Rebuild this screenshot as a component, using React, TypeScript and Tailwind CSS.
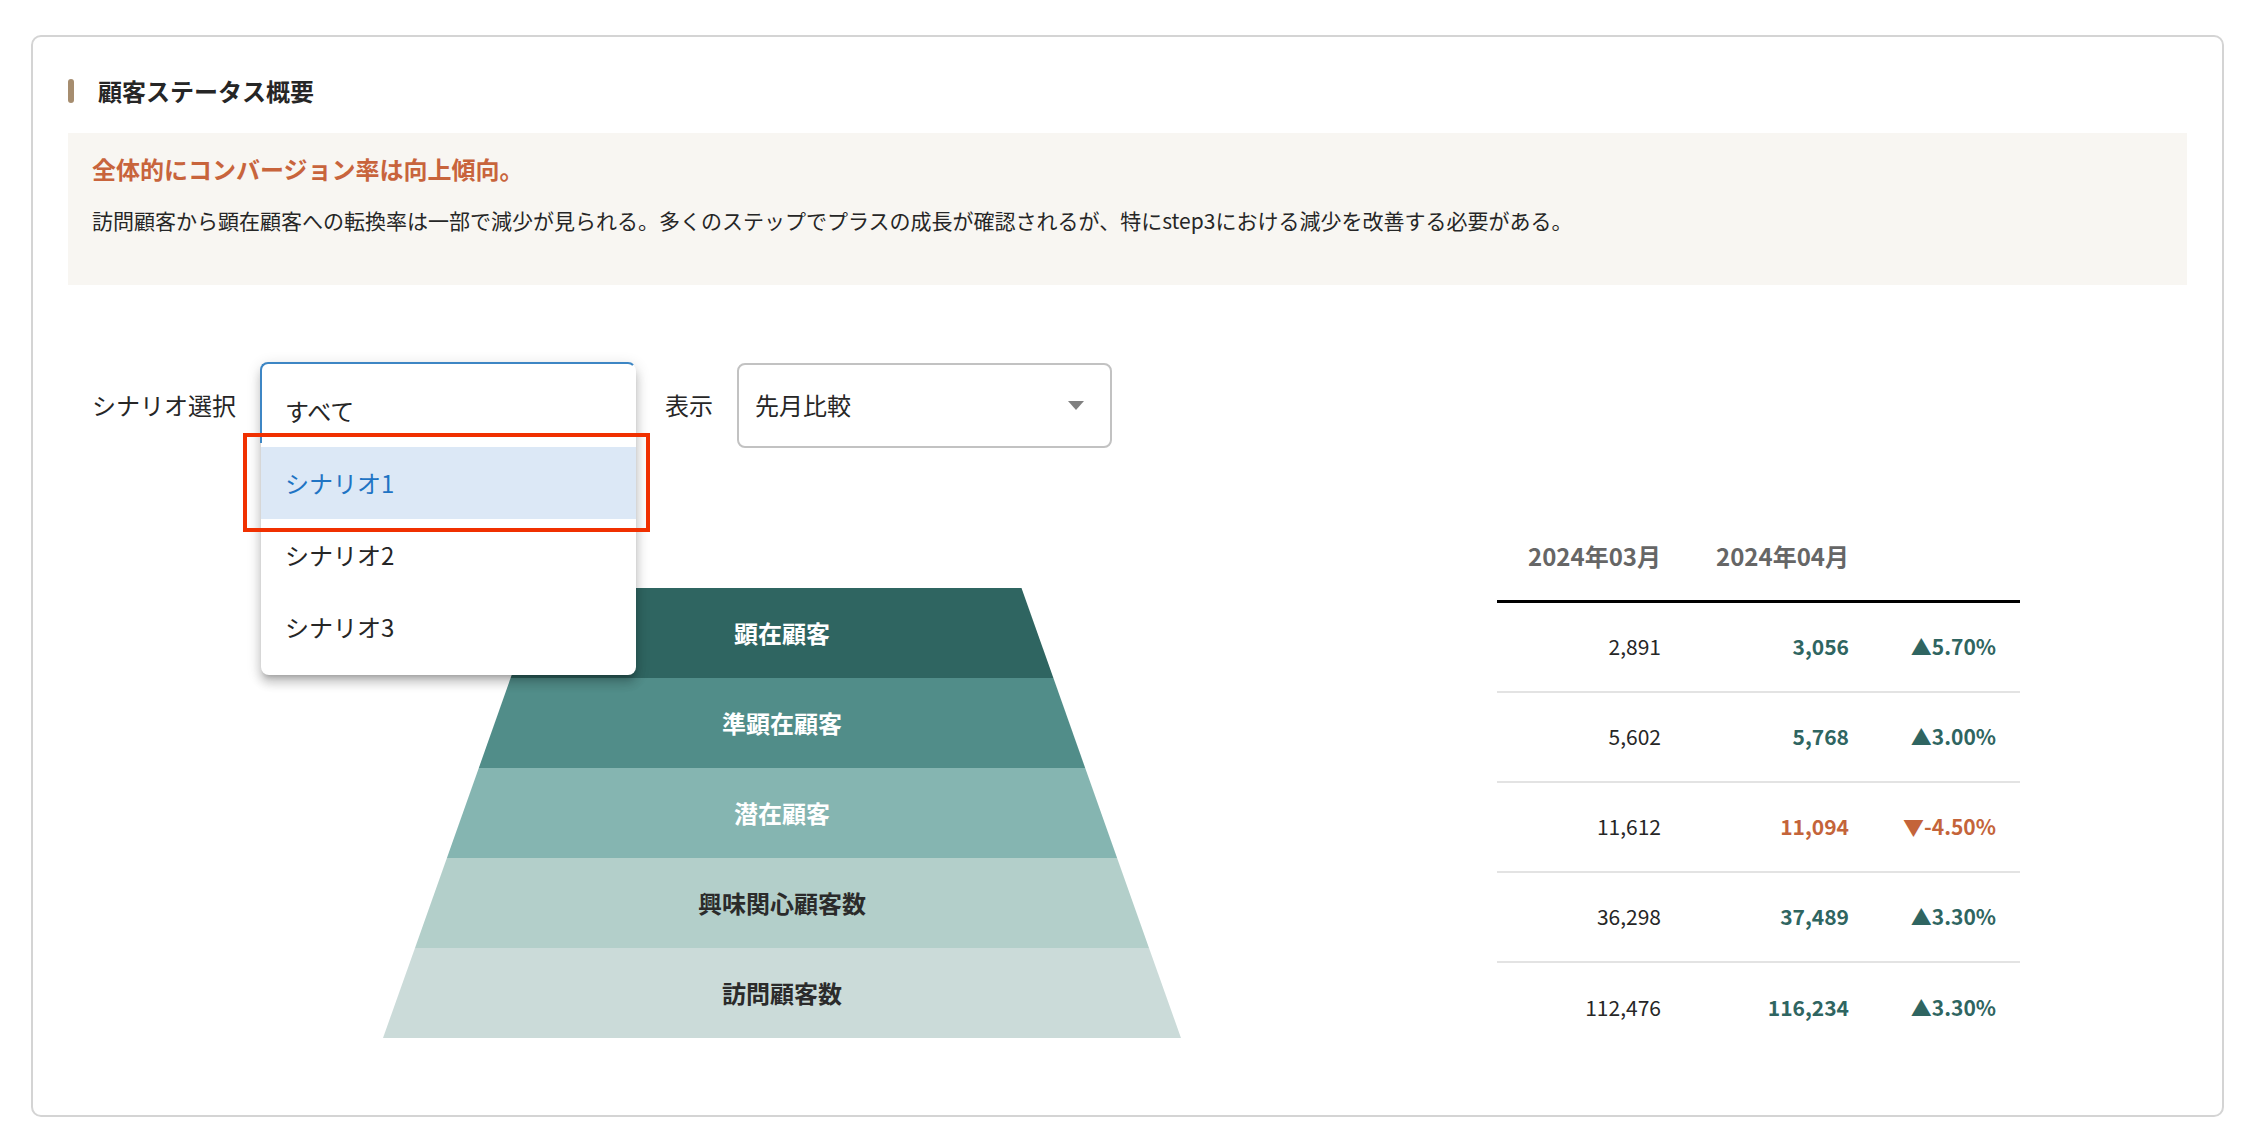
const funnel = [
  { label: '顕在顧客', bg: 'bg-[#2f6561] text-white [clip-path:polygon(159.5px_0,638.5px_0,670.4px_100%,127.6px_100%)]' },
  { label: '準顕在顧客', bg: 'bg-[#518d89] text-white [clip-path:polygon(127.6px_0,670.4px_0,702.2px_100%,95.8px_100%)]' },
  { label: '潜在顧客', bg: 'bg-[#85b5b1] text-white [clip-path:polygon(95.8px_0,702.2px_0,734.1px_100%,63.9px_100%)]' },
  { label: '興味関心顧客数', bg: 'bg-[#b3cfca] text-[#2b2b2b] [clip-path:polygon(63.9px_0,734.1px_0,766px_100%,32px_100%)]' },
  { label: '訪問顧客数', bg: 'bg-[#cbdbd9] text-[#2b2b2b] [clip-path:polygon(32px_0,766px_0,798px_100%,0_100%)]' },
];

const rows = [
  { prev: '2,891', cur: '3,056', rate: '▲5.70%', up: true },
  { prev: '5,602', cur: '5,768', rate: '▲3.00%', up: true },
  { prev: '11,612', cur: '11,094', rate: '▼-4.50%', up: false },
  { prev: '36,298', cur: '37,489', rate: '▲3.30%', up: true },
  { prev: '112,476', cur: '116,234', rate: '▲3.30%', up: true },
];

const options = ['すべて', 'シナリオ1', 'シナリオ2', 'シナリオ3'];

function ScenarioSelect() {
  return (
    <div className="relative h-[84px] w-[376px]">
      <div className="absolute left-px top-0 z-10 w-[375px] rounded-lg bg-white py-3 shadow-[0_5px_5px_-3px_rgba(0,0,0,0.2),0_8px_10px_1px_rgba(0,0,0,0.14),0_3px_14px_2px_rgba(0,0,0,0.12)]">
        {options.map((o, i) => (
          <div
            key={o}
            className={
              i === 1
                ? 'flex h-[72px] items-center bg-[#dce8f6] pl-6 text-[#1f74c4]'
                : 'flex h-[72px] items-center pl-6'
            }
          >
            {o}
          </div>
        ))}
      </div>
      {/* focused select outline shows through above the open menu */}
      <div className="absolute left-0 top-[-1px] z-20 h-[81px] w-[376px] rounded-t-lg border-l-2 border-t-2 border-r-2 border-l-[#3d86c4] border-t-[#3d86c4] border-r-transparent" />
      {/* red annotation frame */}
      <div className="absolute left-[-17px] top-[70px] z-30 h-[99px] w-[407px] border-4 border-[#f03000]" />
    </div>
  );
}

export default function App() {
  return (
    <div className="h-[1144px] w-[2262px] bg-white pl-[31px] pt-[35px] font-['Noto_Sans_CJK_JP','Noto_Sans',sans-serif] text-[#262626]">
      <div className="h-[1082px] w-[2193px] rounded-[10px] border-2 border-[#d4d4d4] pl-[35px] pt-[42px]">
        <div className="flex h-6 items-center gap-6">
          <span className="h-6 w-1.5 rounded-full bg-[#a68d6f]" />
          <h2 className="text-2xl font-bold leading-6">顧客ステータス概要</h2>
        </div>

        <div className="mt-[30px] h-[152px] w-[2119px] bg-[#f8f6f2] pl-6 pt-[19px]">
          <p className="text-2xl font-bold leading-[34px] text-[#c8643c]">全体的にコンバージョン率は向上傾向。</p>
          <p className="mt-[17px] text-[21px] leading-[34px]">
            訪問顧客から顕在顧客への転換率は一部で減少が見られる。多くのステップでプラスの成長が確認されるが、特にstep3における減少を改善する必要がある。
          </p>
        </div>

        <div className="mt-[78px] flex h-[84px] items-center pl-6 text-2xl">
          <span className="w-[168px] shrink-0">シナリオ選択</span>
          <ScenarioSelect />
          <span className="ml-[29px] w-[72px] shrink-0">表示</span>
          <div className="flex h-[85px] w-[375px] shrink-0 items-center justify-between rounded-lg border-2 border-[#c2c2c2] pl-4 pr-[26px]">
            <span>先月比較</span>
            <svg width="16" height="9" viewBox="0 0 16 9">
              <path d="M0 0h16l-8 9z" fill="#808080" />
            </svg>
          </div>
        </div>

        <div className="mt-[65px] flex">
          <div className="ml-[315px] mt-[76px] flex w-[798px] flex-col">
            {funnel.map((f) => (
              <div key={f.label} className={`flex h-[90px] items-center justify-center text-2xl font-bold ${f.bg}`}>
                {f.label}
              </div>
            ))}
          </div>

          <div className="ml-[316px] w-[523px]">
            <div className="grid h-[91px] grid-cols-[164px_188px_147px] items-center border-b-[3px] border-black pr-6 text-right text-2xl font-bold text-[#666666]">
              <span>2024年03月</span>
              <span>2024年04月</span>
              <span />
            </div>
            {rows.map((r, i) => (
              <div
                key={r.prev}
                className={
                  i === rows.length - 1
                    ? 'grid h-[90px] grid-cols-[164px_188px_147px] items-center pr-6 text-right text-[21px]'
                    : 'grid h-[90px] grid-cols-[164px_188px_147px] items-center border-b-2 border-[#e3e3e3] pr-6 text-right text-[21px]'
                }
              >
                <span>{r.prev}</span>
                <span className={r.up ? 'font-bold text-[#2f6561]' : 'font-bold text-[#c4643a]'}>{r.cur}</span>
                <span className={r.up ? 'font-bold text-[#2f6561]' : 'font-bold text-[#c4643a]'}>{r.rate}</span>
              </div>
            ))}
          </div>
        </div>
      </div>
    </div>
  );
}
